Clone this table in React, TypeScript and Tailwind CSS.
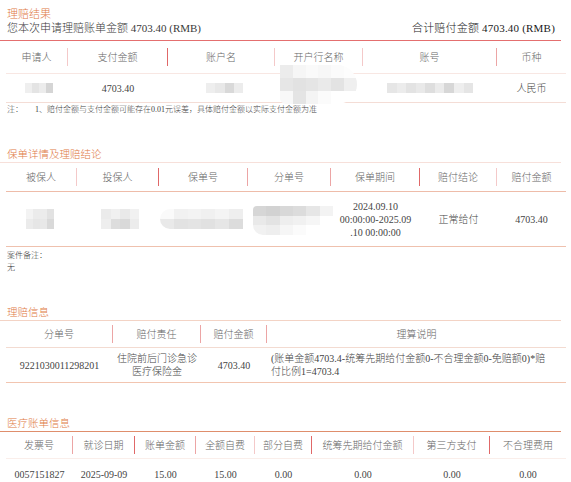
import type { ReactNode } from 'react';

type Col = { label: string; w: string; div?: string };

const LIGHT = 'bg-[#f4c9c9]';
const MID = 'bg-[#eca5a5]';
const RED = 'bg-[#e06868]';

const Mosaic = ({ className, rows }: { className: string; rows: string[][] }) => (
  <div className={`flex flex-col overflow-hidden blur-[0.5px] ${className}`}>
    {rows.map((r, i) => (
      <div key={i} className="flex flex-1">
        {r.map((c, j) => (
          <div key={j} className={`flex-1 ${c}`} />
        ))}
      </div>
    ))}
  </div>
);

const Table = ({
  cols,
  headH,
  rowH,
  cells,
  headLine,
  bottomLine,
}: {
  cols: Col[];
  headH: string;
  rowH: string;
  cells: ReactNode[];
  headLine: string;
  bottomLine?: string;
}) => (
  <div className="ml-[6px] w-[560px] text-[10px]">
    <div className={`flex ${headH} text-[#666]`}>
      {cols.map((c) => (
        <div key={c.label} className={`flex items-center ${c.w}`}>
          <span className="flex-1 text-center whitespace-nowrap">{c.label}</span>
          {c.div && <span className={`w-px h-[18px] ${c.div}`} />}
        </div>
      ))}
    </div>
    <div className={`h-px ${headLine}`} />
    <div className={`flex ${rowH} text-[#444]`}>
      {cols.map((c, i) => (
        <div key={c.label} className={`relative flex items-center justify-center ${c.w}`}>
          {cells[i]}
        </div>
      ))}
    </div>
    {bottomLine && <div className={`h-px ${bottomLine}`} />}
  </div>
);

const Title = ({ children, className }: { children: ReactNode; className: string }) => (
  <div className={`px-[7px] h-[15px] leading-[15px] text-[10.5px] text-[#e07a45] ${className}`}>{children}</div>
);

export default function App() {
  const t1: Col[] = [
    { label: '申请人', w: 'w-[62px]', div: LIGHT },
    { label: '支付金额', w: 'w-[100px]', div: RED },
    { label: '账户名', w: 'w-[107px]', div: LIGHT },
    { label: '开户行名称', w: 'w-[88px]', div: LIGHT },
    { label: '账号', w: 'w-[134px]', div: MID },
    { label: '币种', w: 'flex-1' },
  ];
  const t2: Col[] = [
    { label: '被保人', w: 'w-[71px]', div: LIGHT },
    { label: '投保人', w: 'w-[82px]', div: RED },
    { label: '保单号', w: 'w-[89px]', div: MID },
    { label: '分单号', w: 'w-[83px]', div: MID },
    { label: '保单期间', w: 'w-[89px]', div: RED },
    { label: '赔付结论', w: 'w-[77px]', div: LIGHT },
    { label: '赔付金额', w: 'flex-1' },
  ];
  const t3: Col[] = [
    { label: '分单号', w: 'w-[107px]', div: MID },
    { label: '赔付责任', w: 'w-[88px]', div: MID },
    { label: '赔付金额', w: 'w-[66px]', div: MID },
    { label: '理算说明', w: 'flex-1' },
  ];
  const t4: Col[] = [
    { label: '发票号', w: 'w-[67px]', div: MID },
    { label: '就诊日期', w: 'w-[62px]', div: RED },
    { label: '账单金额', w: 'w-[61px]', div: MID },
    { label: '全额自费', w: 'w-[59px]', div: LIGHT },
    { label: '部分自费', w: 'w-[57px]', div: RED },
    { label: '统筹先期给付金额', w: 'w-[102px]', div: LIGHT },
    { label: '第三方支付', w: 'w-[76px]', div: RED },
    { label: '不合理费用', w: 'flex-1' },
  ];

  return (
    <div className="w-[571px] bg-white font-light font-['Liberation_Serif','Noto_Sans_CJK_SC',serif] text-[#444]">
      {/* 理赔结果 */}
      <div className="pt-[7px] px-[7px]">
        <div className="h-[14px] leading-[14px] text-[11px] text-[#e07a45]">理赔结果</div>
        <div className="flex justify-between pr-[9px] h-[15px] leading-[15px] text-[11px]">
          <span className="text-[#3a3a3a]">您本次申请理赔账单金额 4703.40 (RMB)</span>
          <span className="text-[#1a1a1a] tracking-[0.2px]">合计赔付金额 4703.40 (RMB)</span>
        </div>
      </div>
      <div className="mt-[4px] w-[561px] h-px bg-[#e46f6f]" />
      <Table
        cols={t1}
        headH="h-[32px]"
        rowH="h-[28px]"
        headLine="bg-[#f8e7e3]"
        bottomLine="bg-[#f4ddd6]"
        cells={[
          <Mosaic
            key="a"
            className="w-[28px] h-[10px] ml-[3px]"
            rows={[['bg-[#efefef]', 'bg-[#e4e4e4]', 'bg-[#ececec]', 'bg-[#d5d5d5]']]}
          />,
          '4703.40',
          <Mosaic
            key="b"
            className="w-[37px] h-[10px] ml-[6px]"
            rows={[['bg-[#eeeeee]', 'bg-[#e8e8e8]', 'bg-[#d9d9d9]', 'bg-[#ececec]']]}
          />,
          <Mosaic
            key="c"
            className="absolute left-[5px] top-[-9px] w-[77px] h-[39px] rounded-r-[20px] rounded-bl-[6px]"
            rows={[
              ['bg-[#ececec]', 'bg-[#f6f6f6]', 'bg-[#fafafa]', 'bg-[#f7f7f7]', 'bg-[#fbfbfb]', 'bg-[#fdfdfd]'],
              ['bg-[#e6e6e6]', 'bg-[#e2e2e2]', 'bg-[#e5e5e5]', 'bg-[#eaeaea]', 'bg-[#e3e3e3]', 'bg-[#efefef]'],
              ['bg-[#f8f8f8]', 'bg-[#e4e4e4]', 'bg-[#f4f4f4]', 'bg-[#fbfbfb]', 'bg-[#ffffff]', 'bg-[#ffffff]'],
            ]}
          />,
          <Mosaic
            key="d"
            className="w-[86px] h-[10px]"
            rows={[
              [
                'bg-[#e6e6e6]',
                'bg-[#ececec]',
                'bg-[#e3e3e3]',
                'bg-[#e9e9e9]',
                'bg-[#dedede]',
                'bg-[#ebebeb]',
                'bg-[#d7d7d7]',
                'bg-[#eeeeee]',
                'bg-[#e5e5e5]',
              ],
            ]}
          />,
          '人民币',
        ]}
      />
      <div className="flex px-[7px] mt-px h-[12px] leading-[12px] text-[8px] text-[#444] whitespace-nowrap">
        <span>注：</span>
        <span className="ml-[12px]">1、赔付金额与支付金额可能存在0.01元误差，具体赔付金额以实际支付金额为准</span>
      </div>

      {/* 保单详情及理赔结论 */}
      <Title className="mt-[31px]">保单详情及理赔结论</Title>
      <div className="w-[561px] h-px bg-[#f7e0da]" />
      <Table
        cols={t2}
        headH="h-[28px]"
        rowH="h-[54px]"
        headLine="bg-[#eebca9]"
        bottomLine="bg-[#efc1ae]"
        cells={[
          <Mosaic
            key="a"
            className="w-[28px] h-[20px] mr-[4px]"
            rows={[
              ['bg-[#f3f3f3]', 'bg-[#ebebeb]', 'bg-[#ececec]', 'bg-[#e2e2e2]'],
              ['bg-[#ebebeb]', 'bg-[#e6e6e6]', 'bg-[#e8e8e8]', 'bg-[#d9d9d9]'],
            ]}
          />,
          <Mosaic
            key="b"
            className="w-[38px] h-[20px] ml-[4px]"
            rows={[
              ['bg-[#ebebeb]', 'bg-[#f0f0f0]', 'bg-[#e9e9e9]', 'bg-[#f1f1f1]'],
              ['bg-[#eeeeee]', 'bg-[#dddddd]', 'bg-[#d9d9d9]', 'bg-[#ececec]'],
            ]}
          />,
          <Mosaic
            key="c"
            className="w-[83px] h-[20px] mr-[4px] rounded-l-[10px]"
            rows={[
              ['bg-[#fafafa]', 'bg-[#f1f1f1]', 'bg-[#f3f3f3]', 'bg-[#f0f0f0]', 'bg-[#f4f4f4]', 'bg-[#eeeeee]'],
              ['bg-[#e9e9e9]', 'bg-[#e2e2e2]', 'bg-[#e4e4e4]', 'bg-[#e1e1e1]', 'bg-[#e6e6e6]', 'bg-[#dcdcdc]'],
            ]}
          />,
          <Mosaic
            key="d"
            className="absolute left-[5px] top-[14px] w-[80px] h-[29px] rounded-tl-[4px] rounded-bl-[10px]"
            rows={[
              ['bg-[#d6d6d6]', 'bg-[#d2d2d2]', 'bg-[#d8d8d8]', 'bg-[#dcdcdc]', 'bg-[#e6e6e6]', 'bg-[#f3f3f3]'],
              ['bg-[#e9e9e9]', 'bg-[#e3e3e3]', 'bg-[#eeeeee]', 'bg-[#f1f1f1]', 'bg-[#f6f6f6]', 'bg-[#ffffff]'],
              ['bg-[#f1f1f1]', 'bg-[#eeeeee]', 'bg-[#f6f6f6]', 'bg-[#fbfbfb]', 'bg-[#ffffff]', 'bg-[#ffffff]'],
            ]}
          />,
          <div key="e" className="text-center leading-[13px]">
            2024.09.10
            <br />
            00:00:00-2025.09
            <br />
            .10 00:00:00
          </div>,
          '正常给付',
          '4703.40',
        ]}
      />
      <div className="px-[7px] mt-[3px] text-[8px] leading-[12px] text-[#333]">
        <div>案件备注：</div>
        <div>无</div>
      </div>

      {/* 理赔信息 */}
      <Title className="mt-[31px]">理赔信息</Title>
      <div className="w-[561px] h-px bg-[#f3d3c5]" />
      <Table
        cols={t3}
        headH="h-[26px]"
        rowH="h-[34px]"
        headLine="bg-[#f3dbd1]"
        bottomLine="bg-[#f2c5b0]"
        cells={[
          '9221030011298201',
          <div key="b" className="text-center leading-[13px]">
            住院前后门诊急诊
            <br />
            医疗保险金
          </div>,
          '4703.40',
          <div key="d" className="w-full pl-[4px] leading-[13px]">
            (账单金额4703.4-统筹先期给付金额0-不合理金额0-免赔额0)*赔
            <br />
            付比例1=4703.4
          </div>,
        ]}
      />

      {/* 医疗账单信息 */}
      <Title className="mt-[33px]">医疗账单信息</Title>
      <div className="w-[561px] h-px bg-[#df8e6c]" />
      <Table
        cols={t4}
        headH="h-[26px]"
        rowH="h-[30px]"
        headLine="bg-[#faeeea]"
        cells={['0057151827', '2025-09-09', '15.00', '15.00', '0.00', '0.00', '0.00', '0.00']}
      />
    </div>
  );
}
